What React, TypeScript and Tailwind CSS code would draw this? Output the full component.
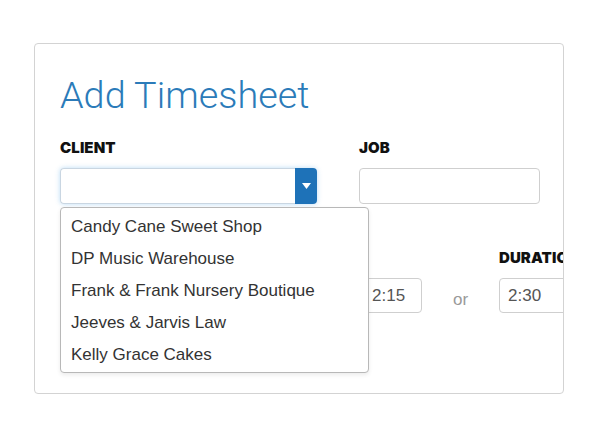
import { memo } from 'react';

const clients = [
  'Candy Cane Sweet Shop',
  'DP Music Warehouse',
  'Frank & Frank Nursery Boutique',
  'Jeeves & Jarvis Law',
  'Kelly Grace Cakes',
];

const labelClass =
  "block font-['Inter',sans-serif] font-black text-[15px] leading-[17px] tracking-[0.1px] text-[#111] mb-3";
const inputClass =
  "shrink-0 h-[35px] border border-[#cfcfcf] rounded-[4px] bg-white px-[8px] font-['Liberation_Sans',Arial,sans-serif] text-[17px] text-[#555] outline-none";

const ClientDropdown = memo(function ClientDropdown() {
  return (
    <ul className="absolute left-[25px] top-[163px] w-[309px] border border-[#b8b8b8] rounded-[4px] bg-white pt-[3px] pb-[1px] shadow-[0_2px_4px_rgba(0,0,0,0.08)]">
      {clients.map((name) => (
        <li
          key={name}
          className="h-[32px] px-[10px] flex items-center font-['Liberation_Sans',Arial,sans-serif] text-[17px] text-[#333] cursor-pointer">
          {name}
        </li>
      ))}
    </ul>
  );
});

export default function App() {
  return (
    <div className="w-[600px] h-[437px] bg-white pt-[43px] pl-[34px]">
      <div className="relative w-[530px] h-[351px] border border-[#d3d3d3] rounded-[4px] overflow-hidden pl-[25px] pt-[29px]">
        <h1 className="font-['Roboto',sans-serif] font-light text-[37.8px] leading-[45px] text-[#2b7bb9]">
          Add Timesheet
        </h1>

        <div className="flex gap-[42px] mt-[21px]">
          <div className="w-[257px]">
            <label className={labelClass}>CLIENT</label>
            <div className="flex h-[36px] rounded-[4px] shadow-[0_0_5px_rgba(102,175,233,0.45)]">
              <input
                readOnly
                className="flex-1 min-w-0 h-[36px] border border-[#c9d6e2] border-r-0 rounded-l-[4px] bg-white px-[8px] outline-none"
              />
              <button className="w-[22px] h-[36px] bg-[#1e72b8] rounded-r-[4px] flex items-center justify-center">
                <svg width="9" height="6" viewBox="0 0 9 6">
                  <path d="M0 0h9L4.5 6z" fill="#fff" />
                </svg>
              </button>
            </div>
          </div>
          <div className="w-[181px]">
            <label className={labelClass}>JOB</label>
            <input readOnly className={`${inputClass} w-[181px] h-[36px]`} />
          </div>
        </div>

        <div className="flex items-end w-max mt-[45px]">
          <div className="shrink-0">
            <div className="h-[17px] mb-3" />
            <div className="flex">
              <input readOnly className={`${inputClass} w-[257px]`} />
              <span className="w-[46px] shrink-0" />
              <input readOnly defaultValue="2:15" className={`${inputClass} w-[59px]`} />
            </div>
          </div>
          <span className="shrink-0 w-[77px] h-[35px] flex items-center justify-center pt-[9px] font-['Liberation_Sans',Arial,sans-serif] text-[17px] text-[#999]">
            or
          </span>
          <div className="shrink-0">
            <label className={`${labelClass} whitespace-nowrap`}>DURATION</label>
            <input readOnly defaultValue="2:30" className={`${inputClass} w-[80px]`} />
          </div>
        </div>

        <ClientDropdown />
      </div>
    </div>
  );
}
